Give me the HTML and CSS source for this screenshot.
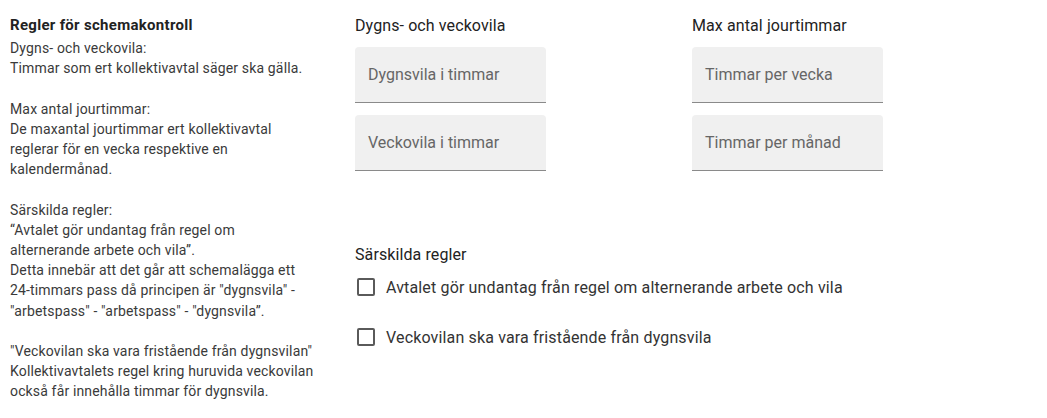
FILE: index.html
```html
<!DOCTYPE html>
<html lang="sv">
<head>
<meta charset="utf-8">
<link rel="stylesheet" href="styles.css">
</head>
<body>
<div class="page">
  <aside class="help">
    <h2 class="help-title">Regler för schemakontroll</h2>
    <p class="help-text">Dygns- och veckovila:<br>Timmar som ert kollektivavtal säger ska gälla.</p>
    <p class="help-text">Max antal jourtimmar:<br>De maxantal jourtimmar ert kollektivavtal<br>reglerar för en vecka respektive en<br>kalendermånad.</p>
    <p class="help-text">Särskilda regler:<br>“Avtalet gör undantag från regel om<br>alternerande arbete och vila”.<br>Detta innebär att det går att schemalägga ett<br>24-timmars pass då principen är "dygnsvila" -<br>"arbetspass" - "arbetspass" - "dygnsvila”.</p>
    <p class="help-text">"Veckovilan ska vara fristående från dygnsvilan"<br>Kollektivavtalets regel kring huruvida veckovilan<br>också får innehålla timmar för dygnsvila.</p>
  </aside>
  <main class="form">
    <div class="groups">
      <section class="group">
        <h3 class="group-label">Dygns- och veckovila</h3>
        <div class="field"><span class="placeholder">Dygnsvila i timmar</span></div>
        <div class="field"><span class="placeholder">Veckovila i timmar</span></div>
      </section>
      <section class="group">
        <h3 class="group-label">Max antal jourtimmar</h3>
        <div class="field"><span class="placeholder">Timmar per vecka</span></div>
        <div class="field"><span class="placeholder">Timmar per månad</span></div>
      </section>
    </div>
    <section class="special">
      <h3 class="group-label">Särskilda regler</h3>
      <label class="check"><span class="box"></span><span class="check-text">Avtalet gör undantag från regel om alternerande arbete och vila</span></label>
      <label class="check"><span class="box"></span><span class="check-text">Veckovilan ska vara fristående från dygnsvila</span></label>
    </section>
  </main>
</div>
</body>
</html>
```
FILE: styles.css
```css
html, body {
  margin: 0;
  padding: 0;
  background: #ffffff;
}
body {
  font-family: Roboto, "Liberation Sans", Arial, sans-serif;
  color: #222;
}
.page {
  display: flex;
  padding: 15px 0 0 10px;
}
.help {
  width: 345px;
  flex: none;
}
.help-title {
  margin: 0 0 3px;
  font-size: 15px;
  line-height: 20px;
  font-weight: 700;
  letter-spacing: 0.3px;
  color: #222;
}
.help-text {
  margin: 0 0 20.2px;
  font-size: 14px;
  line-height: 20.2px;
  letter-spacing: 0.15px;
  color: #3a3a3a;
}
.form {
  display: flex;
  flex-direction: column;
  margin-top: -1px;
}
.groups {
  display: grid;
  grid-template-columns: 337px 191px;
  padding-top: 2px;
}
.group {
  display: flex;
  flex-direction: column;
  gap: 12px;
  width: 191px;
}
.group-label {
  margin: 0 0 -1px;
  font-size: 16px;
  line-height: 20px;
  font-weight: 400;
  letter-spacing: 0.1px;
  color: #222;
}
.field {
  height: 55px;
  background: #f0f0f0;
  border-radius: 4px 4px 0 0;
  border-bottom: 1px solid #8a8a8a;
  display: flex;
  align-items: center;
  padding: 0 13px;
}
.placeholder {
  font-size: 16px;
  color: #666;
}
.special {
  margin-top: 74px;
  display: flex;
  flex-direction: column;
}
.special .group-label {
  margin-bottom: 2px;
}
.check {
  display: flex;
  align-items: center;
  height: 40px;
  margin-bottom: 10px;
  padding-left: 2px;
}
.box {
  width: 14px;
  height: 14px;
  border: 2px solid #5a5a5a;
  border-radius: 2px;
  flex: none;
}
.check-text {
  margin-left: 11px;
  font-size: 16px;
  letter-spacing: 0.15px;
  color: #333;
}
```
